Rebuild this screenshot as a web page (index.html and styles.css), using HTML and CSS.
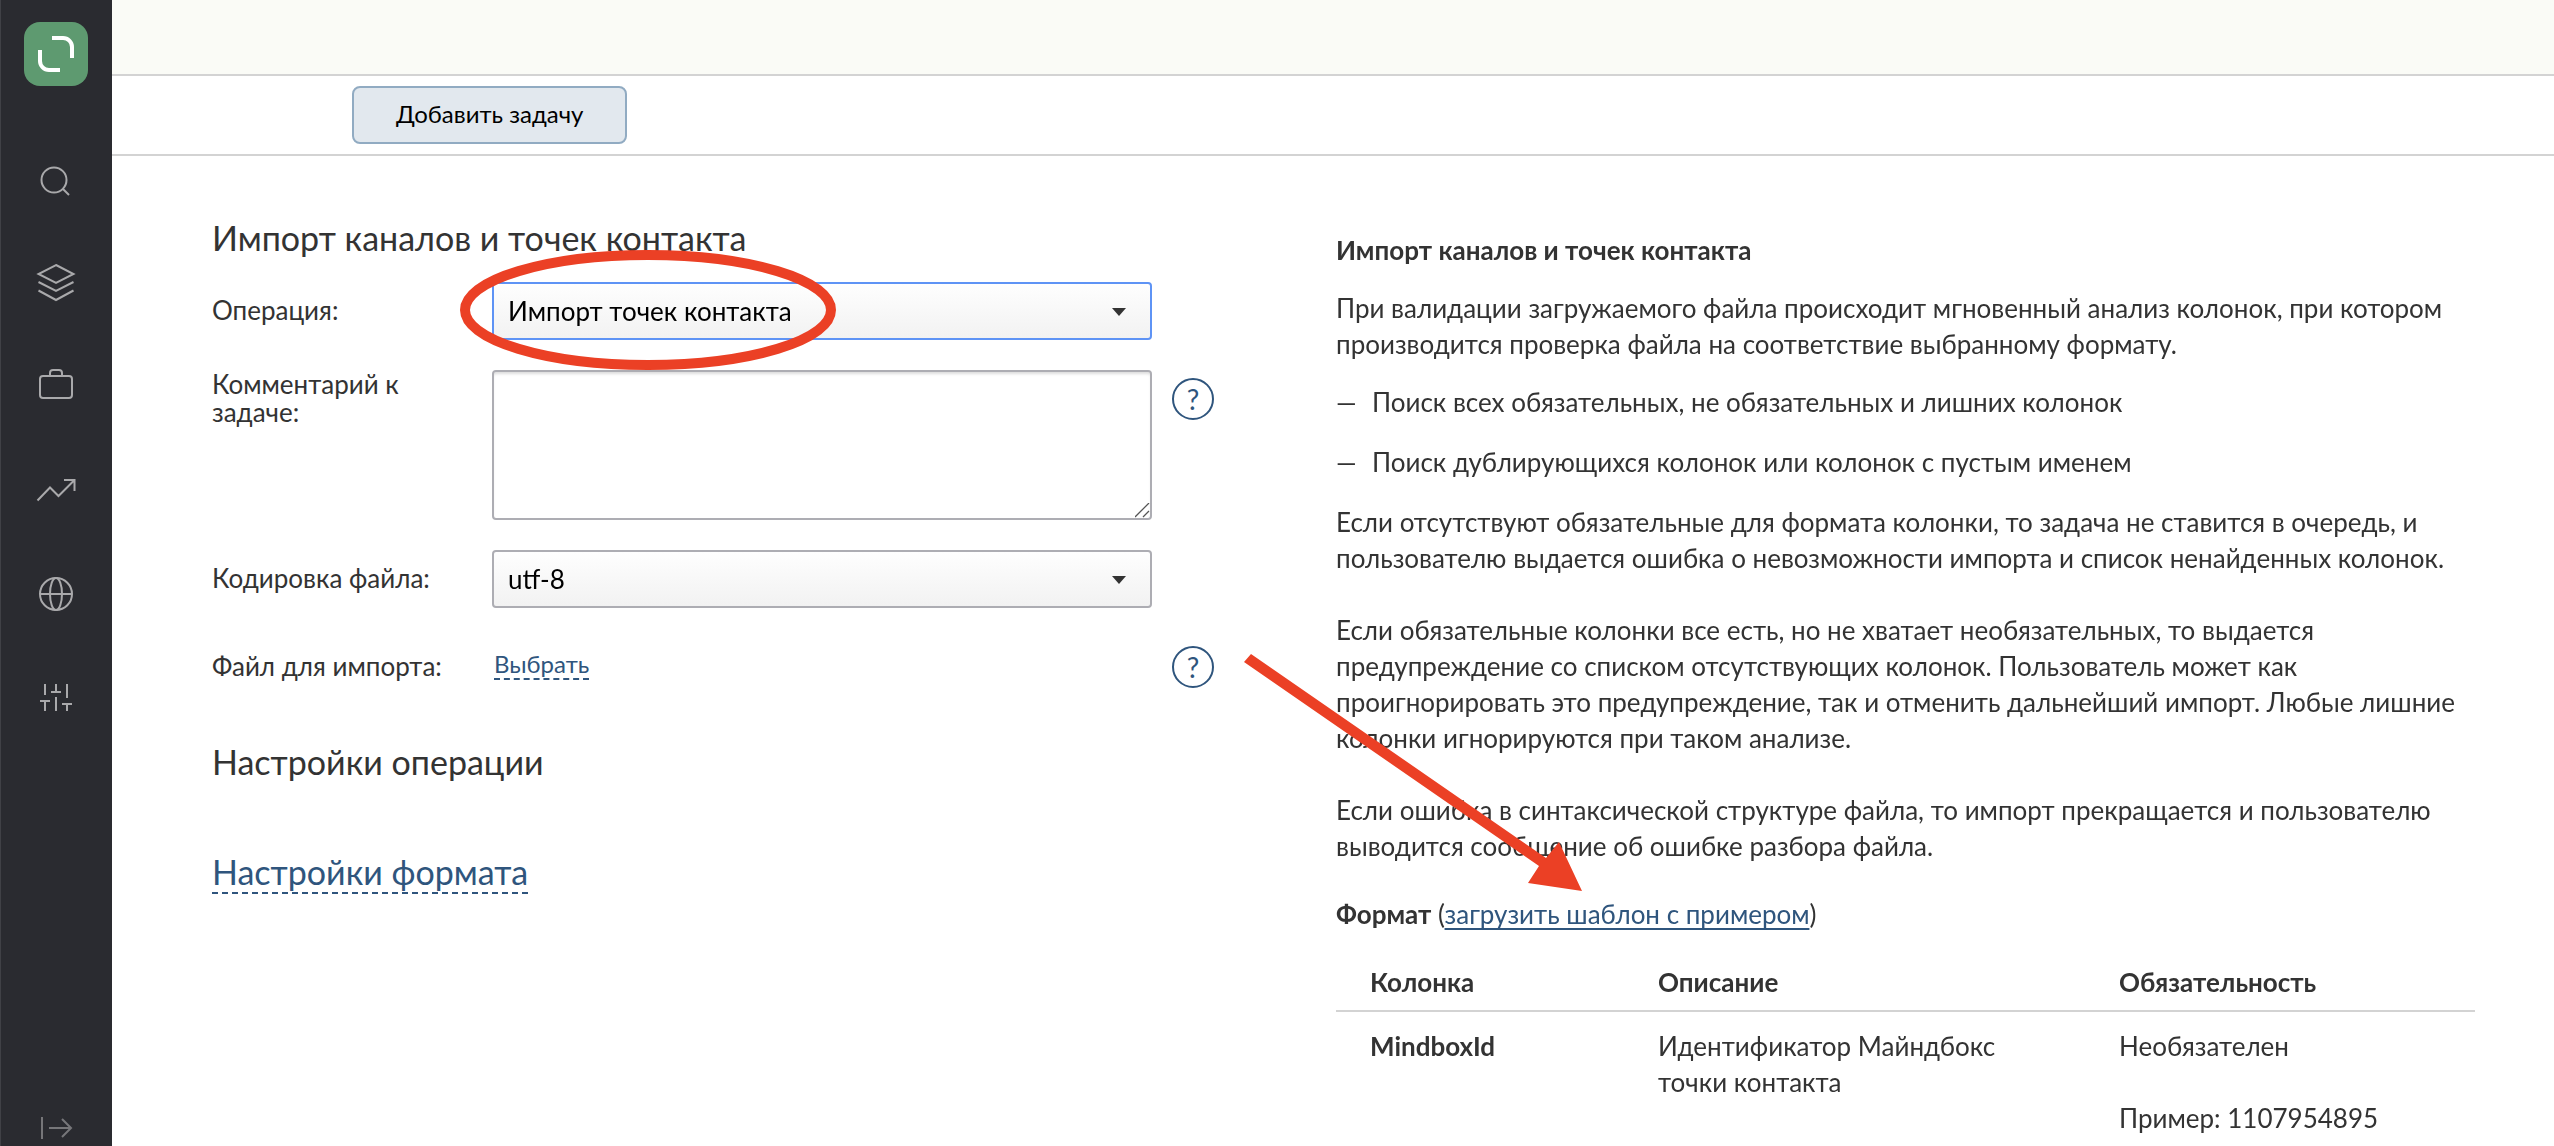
FILE: index.html
```html
<!DOCTYPE html>
<html lang="ru">
<head>
<meta charset="utf-8">
<title>Импорт каналов и точек контакта</title>
<link rel="stylesheet" href="styles.css">
</head>
<body>
<div class="app">
  <nav class="sidebar" aria-label="Главное меню">
    <a class="logo" href="#" aria-label="Главная">
      <svg width="64" height="64" viewBox="0 0 64 64" fill="none" stroke="#fff" stroke-width="4">
        <path d="M28 16h11a9 9 0 0 1 9 9v11M16 28v11a9 9 0 0 0 9 9h11"/>
      </svg>
    </a>
    <a class="nav-item" href="#" aria-label="Поиск">
      <svg class="icon" viewBox="0 0 40 40"><circle cx="18" cy="22" r="12.5"/><path d="M27 31l6 6"/></svg>
    </a>
    <a class="nav-item" href="#" aria-label="Слои">
      <svg class="icon" viewBox="0 0 40 40"><path d="M20 3l17.500 9L20 21 2.500 12zM2.500 20L20 29l17.500-9M2.500 28.500L20 38l17.500-9.500"/></svg>
    </a>
    <a class="nav-item" href="#" aria-label="Проекты">
      <svg class="icon" viewBox="0 0 40 40"><rect x="4" y="10" width="32" height="22" rx="3"/><path d="M14 10v-3a3 3 0 0 1 3-3h6a3 3 0 0 1 3 3v3"/></svg>
    </a>
    <a class="nav-item" href="#" aria-label="Отчёты">
      <svg class="icon" viewBox="0 0 40 40"><path d="M1.500 30.500L14 17.500l8.500 8.500L38 10.500M28 10h10.500v11"/></svg>
    </a>
    <a class="nav-item" href="#" aria-label="Сайты">
      <svg class="icon" viewBox="0 0 40 40"><circle cx="20" cy="20" r="16"/><ellipse cx="20" cy="20" rx="6" ry="16"/><path d="M4 20h32"/></svg>
    </a>
    <a class="nav-item" href="#" aria-label="Настройки">
      <svg class="icon" viewBox="0 0 40 40"><path d="M9 6v11M4 23h10M9 23v10M20 6v8M15 14h10M20 19v14M31 6v14M26 26h10M31 26v7"/></svg>
    </a>
    <a class="nav-item nav-expand" href="#" aria-label="Развернуть">
      <svg class="icon" viewBox="0 0 40 40"><path d="M6 9v22M13 20h22M26 11l9 9-9 9"/></svg>
    </a>
  </nav>

  <div class="page">
    <header class="topbar"></header>
    <div class="toolbar"><button class="btn" type="submit" form="import-form">Добавить задачу</button></div>

    <main class="content">
      <form class="task" id="import-form">
        <h1 class="heading">Импорт каналов и точек контакта</h1>
        <div class="fields">
          <label class="label" for="operation">Операция:</label>
          <div class="control">
            <select class="select select-active" id="operation"><option>Импорт точек контакта</option></select>
            <svg class="caret" width="14" height="8" viewBox="0 0 14 8"><path d="M0 0h14L7 8z" fill="#333"/></svg>
            <svg class="mark-oval" viewBox="0 0 376 120"><ellipse cx="188" cy="60" rx="183" ry="55"/></svg>
          </div>
          <span></span>

          <label class="label label-top" for="comment">Комментарий к задаче:</label>
          <textarea class="textarea" id="comment"></textarea>
          <button class="help" type="button">?</button>

          <label class="label" for="encoding">Кодировка файла:</label>
          <div class="control">
            <select class="select" id="encoding"><option>utf-8</option></select>
            <svg class="caret" width="14" height="8" viewBox="0 0 14 8"><path d="M0 0h14L7 8z" fill="#333"/></svg>
          </div>
          <span></span>

          <span class="label">Файл для импорта:</span>
          <div class="file"><button class="choose" type="button">Выбрать</button></div>
          <button class="help" type="button">?</button>
        </div>
        <h2 class="heading heading-operation">Настройки операции</h2>
        <h2 class="heading heading-format"><a class="format-link" href="#">Настройки формата</a></h2>
      </form>

      <aside class="guide">
        <h3 class="guide-title">Импорт каналов и точек контакта</h3>
        <p class="intro">При валидации загружаемого файла происходит мгновенный анализ колонок, при котором производится проверка файла на соответствие выбранному формату.</p>
        <ul class="checks">
          <li>Поиск всех обязательных, не обязательных и лишних колонок</li>
          <li>Поиск дублирующихся колонок или колонок с пустым именем</li>
        </ul>
        <div class="notes">
          <p>Если отсутствуют обязательные для формата колонки, то задача не ставится в очередь, и пользователю выдается ошибка о невозможности импорта и список ненайденных колонок.</p>
          <p>Если обязательные колонки все есть, но не хватает необязательных, то выдается предупреждение со списком отсутствующих колонок. Пользователь может как проигнорировать это предупреждение, так и отменить дальнейший импорт. Любые лишние колонки игнорируются при таком анализе.</p>
          <p>Если ошибка в синтаксической структуре файла, то импорт прекращается и пользователю выводится сообщение об ошибке разбора файла.</p>
        </div>
        <p class="format"><b>Формат</b> (<a class="link" href="#">загрузить шаблон с примером</a>)</p>
        <table class="columns">
          <thead>
            <tr><th class="col-name">Колонка</th><th>Описание</th><th class="col-required">Обязательность</th></tr>
          </thead>
          <tbody>
            <tr><th>MindboxId</th><td>Идентификатор Майндбокс точки контакта</td><td>Необязателен<br><br>Пример: 1107954895</td></tr>
          </tbody>
        </table>
        <svg class="mark-arrow" viewBox="0 0 340 238"><path d="M7 0L302 204 315 188 338 237 284 229 295 212 0 8z"/></svg>
      </aside>
    </main>
  </div>
</div>
</body>
</html>
```
FILE: styles.css
```css
* {
  box-sizing: border-box;
}

body {
  margin: 0;
  background: #fff;
  color: #333;
  font: 26px/36px Lato, "Noto Sans", sans-serif;
}

h1, h2, h3, p, ul {
  margin: 0;
  padding: 0;
}

button, select, textarea {
  font-family: inherit;
}

.app {
  display: flex;
  min-height: 100vh;
}

/* Sidebar */
.sidebar {
  position: sticky;
  top: 0;
  flex: none;
  display: flex;
  flex-direction: column;
  align-items: center;
  width: 112px;
  height: 100vh;
  padding-top: 22px;
  background: #2a2b30;
  box-shadow: inset 1px 0 #404146;
}

.logo {
  height: 64px;
  margin-bottom: 40px;
  border-radius: 16px;
  background: #5e9a70;
}

.nav-item {
  display: flex;
  align-items: center;
  height: 104px;
}

.nav-expand {
  height: 40px;
  margin-top: auto;
  margin-bottom: -2px;
  opacity: 0.6;
}

.icon {
  width: 40px;
  height: 40px;
  fill: none;
  stroke: #a9a9ab;
  stroke-width: 2;
}

/* Page frame */
.page {
  flex: 1;
  min-width: 0;
}

.topbar {
  height: 76px;
  border-bottom: 2px solid #d3d3d3;
  background: #fafbf6;
}

.toolbar {
  height: 80px;
  padding: 10px 240px;
  border-bottom: 2px solid #d3d3d3;
}

.btn {
  height: 58px;
  padding: 0 42px 4px;
  border: 2px solid #91abc2;
  border-radius: 8px;
  background: #e2e8ee;
  color: #000;
  font-size: 24px;
}

.content {
  display: grid;
  grid-template-columns: 1006fr 1139fr;
  column-gap: 118px;
  padding: 0 79px 0 100px;
}

/* Task form */
.task {
  padding-top: 62px;
}

.heading {
  font-size: 34px;
  line-height: 40px;
  font-weight: 400;
}

.fields {
  display: grid;
  grid-template-columns: 280px 1fr 66px;
  row-gap: 30px;
  margin-top: 24px;
}

.label {
  padding: 14px 60px 0 0;
  line-height: 28px;
  white-space: nowrap;
}

.label-top {
  padding-top: 0;
  white-space: normal;
}

.control {
  position: relative;
  height: 58px;
}

.select, .textarea {
  display: block;
  width: 100%;
  border: 2px solid #adadb3;
  border-radius: 4px;
  outline: none;
  color: #000;
  font-size: 26px;
}

.select {
  height: 58px;
  padding: 0 60px 0 14px;
  appearance: none;
  background: linear-gradient(#fefefe, #f2f2f2);
}

.select-active {
  border-color: #5e93f5;
}

.caret {
  position: absolute;
  top: 26px;
  right: 26px;
  pointer-events: none;
}

.textarea {
  height: 150px;
  padding: 10px 14px;
  background: #fff;
  box-shadow: inset 0 3px 3px -1px #ddd;
  resize: vertical;
}

.textarea::-webkit-resizer {
  background: url("data:image/svg+xml,%3Csvg xmlns='http://www.w3.org/2000/svg' viewBox='0 0 15 15'%3E%3Cpath d='M0 14L14 0M8 14L14 8' stroke='%23555' stroke-width='1.300'/%3E%3C/svg%3E") center / 100% no-repeat;
}

.help {
  width: 42px;
  height: 42px;
  margin: 8px 0 0 20px;
  padding: 0;
  border: 2px solid #2f557d;
  border-radius: 50%;
  background: none;
  color: #2f557d;
  font-size: 28px;
  line-height: 36px;
}

.file {
  height: 58px;
  padding: 12px 2px;
  line-height: 28px;
}

.choose {
  display: block;
  padding: 0;
  border: 0;
  border-bottom: 2px dashed #2f557d;
  background: none;
  color: #2f557d;
  font-size: 24px;
  line-height: 28px;
}

.heading-operation {
  margin-top: 46px;
}

.heading-format {
  margin-top: 70px;
}

.format-link {
  border-bottom: 2px dashed #2f557d;
  color: #2f557d;
  text-decoration: none;
}

/* Format guide */
.guide {
  position: relative;
  padding-top: 76px;
}

.guide-title {
  font-size: 26px;
}

.intro, .checks {
  margin-top: 22px;
}

.checks {
  list-style: none;
}

.checks li {
  display: flex;
  margin-bottom: 24px;
}

.checks li::before {
  content: "—";
  flex: none;
  width: 36px;
}

.notes {
  display: grid;
  row-gap: 36px;
}

.format {
  margin-top: 32px;
}

.link {
  color: #2f557d;
  text-underline-offset: 4px;
  text-decoration-thickness: 2px;
}

.columns {
  width: 100%;
  margin-top: 22px;
  border-collapse: collapse;
  table-layout: fixed;
}

.columns th, .columns td {
  padding: 10px 34px;
  text-align: left;
  vertical-align: top;
}

.columns thead {
  border-bottom: 2px solid #d3d3d3;
}

.columns tbody th, .columns tbody td {
  padding-top: 16px;
}

.col-name {
  width: 288px;
}

.col-required {
  width: 390px;
}

/* Highlights drawn over the page */
.mark-oval {
  position: absolute;
  top: -32px;
  left: -32px;
  width: 376px;
  height: 120px;
  fill: none;
  stroke: #eb4025;
  stroke-width: 10;
  pointer-events: none;
}

.mark-arrow {
  position: absolute;
  top: 498px;
  left: -92px;
  width: 340px;
  height: 238px;
  fill: #eb4025;
  pointer-events: none;
}
```
